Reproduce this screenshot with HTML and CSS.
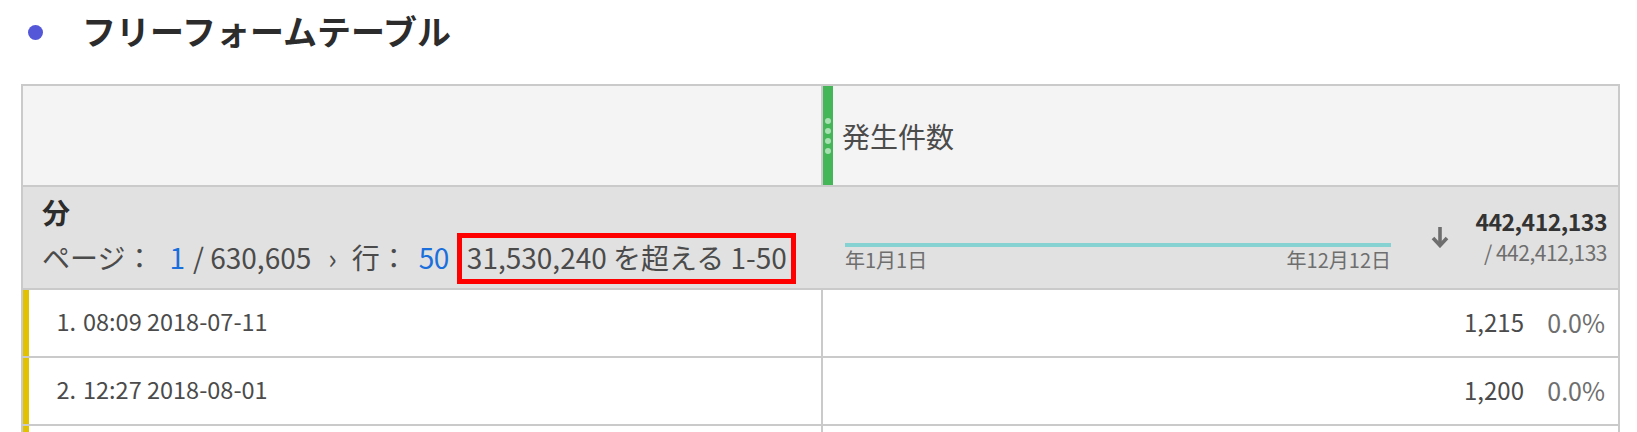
FILE: index.html
```html
<!DOCTYPE html>
<html lang="ja">
<head>
<meta charset="utf-8">
<title>フリーフォームテーブル</title>
<link rel="stylesheet" href="styles.css">
</head>
<body>
<div class="title-row">
  <span class="dot"></span>
  <h1 class="title">フリーフォームテーブル</h1>
</div>
<div class="table">
  <div class="row head">
    <div class="head-left"></div>
    <div class="head-right">
      <div class="grip"><i></i><i></i><i></i><i></i></div>
      <span class="metric">発生件数</span>
    </div>
  </div>
  <div class="row summary">
    <div class="sum-left">
      <div class="dim">分</div>
      <div class="pager">
        <span class="lbl">ページ：</span><span class="link p1">1</span><span class="total">/ 630,605</span><span class="chev">›</span><span class="lbl rows-lbl">行：</span><span class="link p50">50</span><span class="range">31,530,240 を超える 1-50</span>
      </div>
    </div>
    <div class="sum-right">
      <div class="spark">
        <div class="spark-line"></div>
        <div class="spark-labels"><span>年1月1日</span><span>年12月12日</span></div>
      </div>
      <svg class="sort" viewBox="0 0 18 22" aria-hidden="true">
        <path d="M9 1 V19" fill="none" stroke="#6e6e6e" stroke-width="3.6"/>
        <path d="M2 12 L9 19.5 L16 12" fill="none" stroke="#6e6e6e" stroke-width="3.6" stroke-linejoin="miter"/>
      </svg>
      <div class="totals">
        <div class="t-main">442,412,133</div>
        <div class="t-sub">/ 442,412,133</div>
      </div>
    </div>
  </div>
  <div class="row data">
    <div class="data-left"><span class="num">1.</span><span>08:09 2018-07-11</span></div>
    <div class="data-right"><span class="val">1,215</span><span class="pct">0.0%</span></div>
  </div>
  <div class="row data">
    <div class="data-left"><span class="num">2.</span><span>12:27 2018-08-01</span></div>
    <div class="data-right"><span class="val">1,200</span><span class="pct">0.0%</span></div>
  </div>
  <div class="row data">
    <div class="data-left"></div>
    <div class="data-right"></div>
  </div>
</div>
</body>
</html>
```

FILE: styles.css
```css
html, body {
  margin: 0;
  padding: 0;
  background: #ffffff;
}

body {
  font-family: "Noto Sans CJK JP", "Noto Sans", sans-serif;
  color: #4b4b4b;
  overflow: hidden;
}

.title-row {
  display: flex;
  align-items: center;
  height: 62px;
  padding-left: 28px;
}

.dot {
  width: 15px;
  height: 15px;
  border-radius: 50%;
  background: #5457d8;
  margin: 2px 39px 0 0;
  flex-shrink: 0;
}

.title {
  margin: 0;
  font-size: 34px;
  font-weight: 700;
  line-height: 1;
  color: #2c2c2c;
}

.table {
  margin: 22px 0 0 21px;
  width: 1599px;
  box-sizing: border-box;
  border: 2px solid #cacaca;
  border-bottom: none;
}

.row {
  display: flex;
  border-bottom: 2px solid #cacaca;
}

/* header */
.head {
  height: 99px;
  background: #f4f4f4;
}

.head-left {
  width: 800px;
  box-sizing: border-box;
  border-right: 2px solid #cacaca;
  flex-shrink: 0;
}

.head-right {
  flex: 1;
  display: flex;
  align-items: center;
}

.grip {
  width: 10px;
  align-self: stretch;
  background: #44b657;
  display: flex;
  flex-direction: column;
  align-items: center;
  justify-content: center;
  gap: 4px;
}

.grip i {
  display: block;
  width: 6px;
  height: 6px;
  border-radius: 50%;
  background: #a9e0b2;
}

.metric {
  margin-left: 9px;
  font-size: 28px;
  line-height: 1;
  color: #4b4b4b;
}

/* summary */
.summary {
  height: 101px;
  background: #e1e1e1;
}

.sum-left {
  width: 800px;
  flex-shrink: 0;
  box-sizing: border-box;
  padding: 10px 0 0 19px;
}

.dim {
  font-size: 28px;
  font-weight: 700;
  line-height: 30px;
  color: #2c2c2c;
}

.pager {
  display: flex;
  align-items: baseline;
  margin-top: 6px;
  font-size: 28px;
  line-height: 28px;
  color: #4b4b4b;
}

.link {
  color: #1b6fdc;
}

.p1 {
  margin-left: 16px;
}

.total {
  margin-left: 8px;
}

.chev {
  margin-left: 17px;
}

.rows-lbl {
  margin-left: 15px;
}

.p50 {
  margin-left: 11px;
  letter-spacing: -0.5px;
}

.range {
  margin-left: 8px;
  border: 5px solid #ff0000;
  padding: 5px 4px 8px 5px;
}

.sum-right {
  flex: 1;
  display: flex;
  align-items: flex-start;
  padding: 0 11px 0 22px;
}

.spark {
  width: 546px;
  flex-shrink: 0;
  margin-top: 56px;
}

.spark-line {
  height: 4px;
  background: #86d1d1;
}

.spark-labels {
  display: flex;
  justify-content: space-between;
  margin-top: 2px;
  font-size: 20px;
  line-height: 22px;
  color: #6e6e6e;
}

.sort {
  width: 18px;
  height: 22px;
  flex-shrink: 0;
  margin: 39px 0 0 40px;
}

.totals {
  margin-left: auto;
  margin-top: 20px;
  text-align: right;
  white-space: nowrap;
}

.t-main {
  font-size: 23px;
  font-weight: 700;
  line-height: 28px;
  letter-spacing: -0.5px;
  color: #333333;
}

.t-sub {
  margin-top: 4px;
  font-size: 21px;
  line-height: 26px;
  letter-spacing: -0.5px;
  color: #6e6e6e;
}

/* data rows */
.data {
  height: 66px;
  background: #ffffff;
}

.data-left {
  width: 800px;
  flex-shrink: 0;
  box-sizing: border-box;
  border-left: 6px solid #e2c200;
  border-right: 2px solid #cacaca;
  display: flex;
  align-items: center;
  padding-bottom: 2px;
  font-size: 23.5px;
  line-height: 1;
}

.num {
  width: 47px;
  text-align: right;
  margin-right: 7px;
}

.data-right {
  flex: 1;
  display: flex;
  align-items: center;
  justify-content: flex-end;
  padding: 0 13px 2px 0;
  line-height: 1;
}

.val {
  font-size: 24px;
  color: #4b4b4b;
}

.pct {
  width: 64px;
  margin-left: 17px;
  text-align: right;
  font-size: 25px;
  color: #6e6e6e;
}
```
